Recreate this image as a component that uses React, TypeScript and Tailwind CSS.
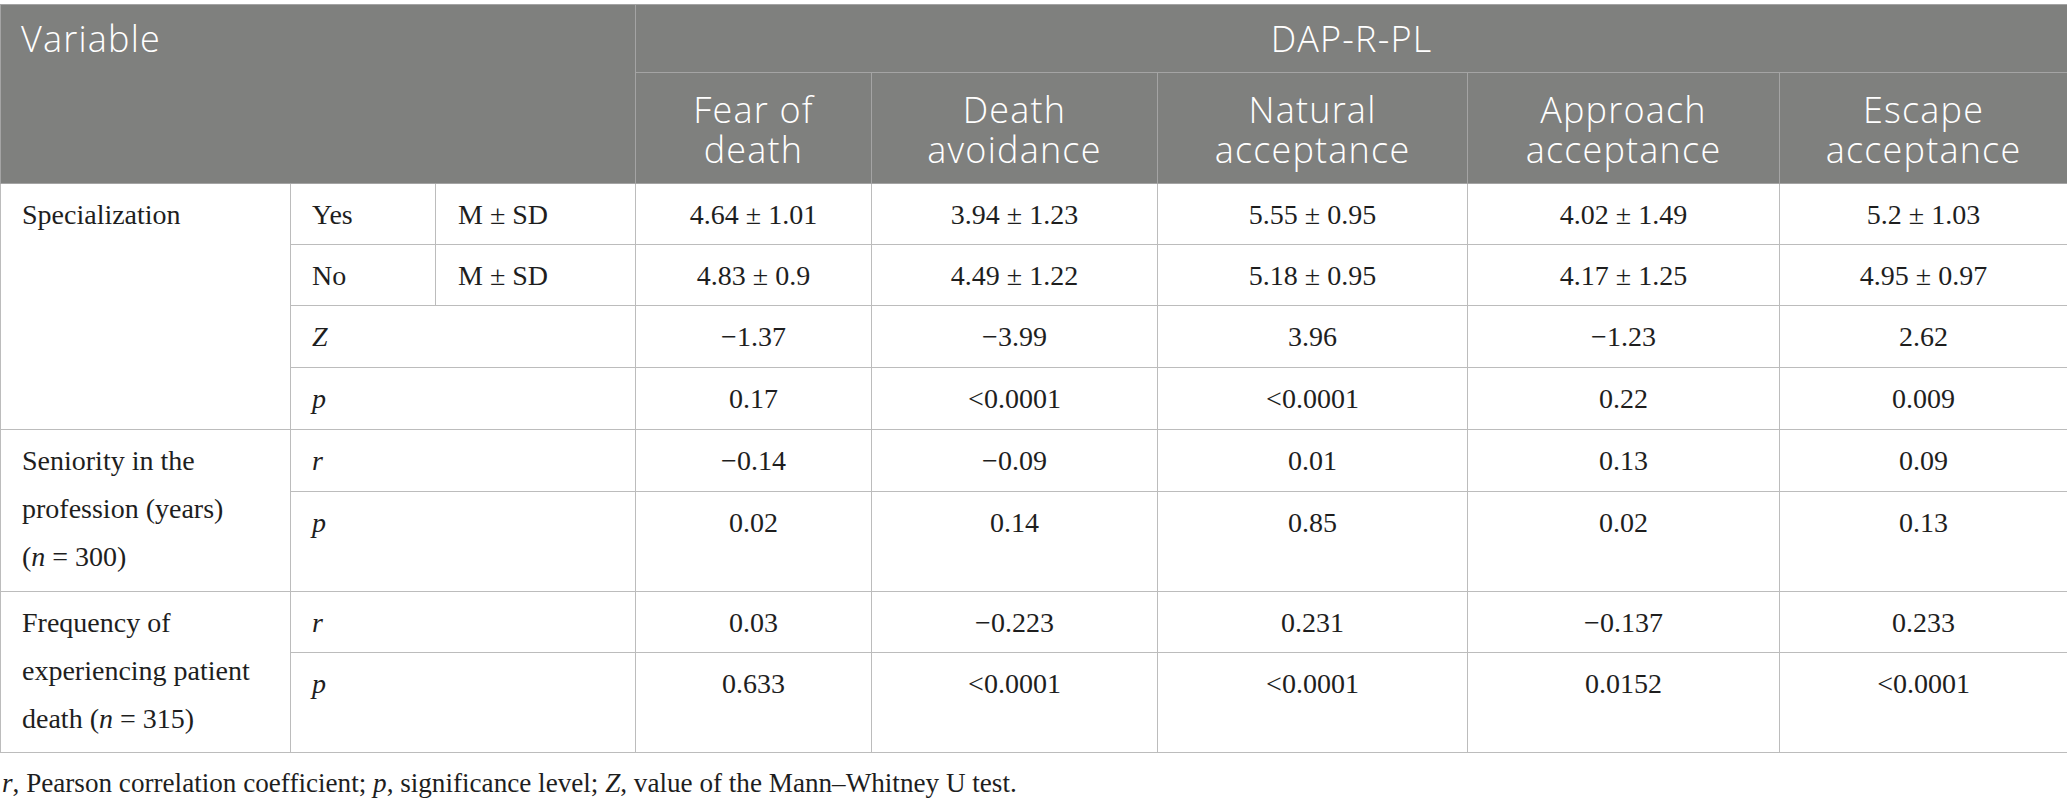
const serif = "font-['Liberation_Serif','Times_New_Roman',serif]";
const sans = "font-['Open_Sans','Noto_Sans',sans-serif]";

type Row = {
  label?: { text: React.ReactNode; span: number };
  sub?: React.ReactNode;
  subSpan?: number;
  stat?: React.ReactNode;
  values: string[];
  h: string;
};

const rows: Row[] = [
  {
    label: { text: "Specialization", span: 4 },
    sub: "Yes",
    stat: "M ± SD",
    values: ["4.64 ± 1.01", "3.94 ± 1.23", "5.55 ± 0.95", "4.02 ± 1.49", "5.2 ± 1.03"],
    h: "h-[61px]",
  },
  {
    sub: "No",
    stat: "M ± SD",
    values: ["4.83 ± 0.9", "4.49 ± 1.22", "5.18 ± 0.95", "4.17 ± 1.25", "4.95 ± 0.97"],
    h: "h-[61px]",
  },
  {
    sub: <i>Z</i>,
    subSpan: 2,
    values: ["−1.37", "−3.99", "3.96", "−1.23", "2.62"],
    h: "h-[62px]",
  },
  {
    sub: <i>p</i>,
    subSpan: 2,
    values: ["0.17", "<0.0001", "<0.0001", "0.22", "0.009"],
    h: "h-[62px]",
  },
  {
    label: {
      text: (
        <>
          Seniority in the
          <br />
          profession (years)
          <br />(<i>n</i> = 300)
        </>
      ),
      span: 2,
    },
    sub: <i>r</i>,
    subSpan: 2,
    values: ["−0.14", "−0.09", "0.01", "0.13", "0.09"],
    h: "h-[62px]",
  },
  {
    sub: <i>p</i>,
    subSpan: 2,
    values: ["0.02", "0.14", "0.85", "0.02", "0.13"],
    h: "h-[100px]",
  },
  {
    label: {
      text: (
        <>
          Frequency of
          <br />
          experiencing patient
          <br />
          death (<i>n</i> = 315)
        </>
      ),
      span: 2,
    },
    sub: <i>r</i>,
    subSpan: 2,
    values: ["0.03", "−0.223", "0.231", "−0.137", "0.233"],
    h: "h-[61px]",
  },
  {
    sub: <i>p</i>,
    subSpan: 2,
    values: ["0.633", "<0.0001", "<0.0001", "0.0152", "<0.0001"],
    h: "h-[100px]",
  },
];

const headCols = [
  ["Fear of", "death"],
  ["Death", "avoidance"],
  ["Natural", "acceptance"],
  ["Approach", "acceptance"],
  ["Escape", "acceptance"],
];

export default function App() {
  const td = "border border-[#bcbcbc] align-top pt-[7px] leading-[48px]";
  const th = "border border-[#a4a4a4] font-light tracking-[1.2px]";

  return (
    <div className="w-[2067px] bg-white pt-[4px] text-[#1e1e1e]">
      <table className="w-[2067px] table-fixed border-collapse">
        <colgroup>
          <col className="w-[290px]" />
          <col className="w-[145px]" />
          <col className="w-[200px]" />
          <col className="w-[236px]" />
          <col className="w-[286px]" />
          <col className="w-[310px]" />
          <col className="w-[312px]" />
          <col className="w-[288px]" />
        </colgroup>
        <thead className={`${sans} bg-[#7f807e] text-white text-[36px]`}>
          <tr className="h-[68px]">
            <th
              rowSpan={2}
              colSpan={3}
              className={`${th} align-top text-left pl-[20px] pt-[13px] leading-[42px]`}
            >
              Variable
            </th>
            <th colSpan={5} className={`${th} text-center leading-[42px] pt-[1px]`}>
              DAP-R-PL
            </th>
          </tr>
          <tr className="h-[111px]">
            {headCols.map((c) => (
              <th key={c.join()} className={`${th} text-center leading-[40px] pt-[3px]`}>
                {c[0]}
                <br />
                {c[1]}
              </th>
            ))}
          </tr>
        </thead>
        <tbody className={`${serif} text-[28px]`}>
          {rows.map((r, i) => (
            <tr key={i} className={r.h}>
              {r.label && (
                <td rowSpan={r.label.span} className={`${td} pl-[21px] whitespace-nowrap`}>
                  {r.label.text}
                </td>
              )}
              <td colSpan={r.subSpan ?? 1} className={`${td} pl-[21px]`}>
                {r.sub}
              </td>
              {r.stat && <td className={`${td} pl-[22px]`}>{r.stat}</td>}
              {r.values.map((v, j) => (
                <td key={j} className={`${td} text-center`}>
                  {v}
                </td>
              ))}
            </tr>
          ))}
        </tbody>
      </table>
      <p className={`${serif} text-[27.15px] leading-[32px] mt-[14px] pl-[2px]`}>
        <i>r</i>, Pearson correlation coefficient; <i>p</i>, significance level; <i>Z</i>, value of
        the Mann–Whitney U test.
      </p>
    </div>
  );
}
